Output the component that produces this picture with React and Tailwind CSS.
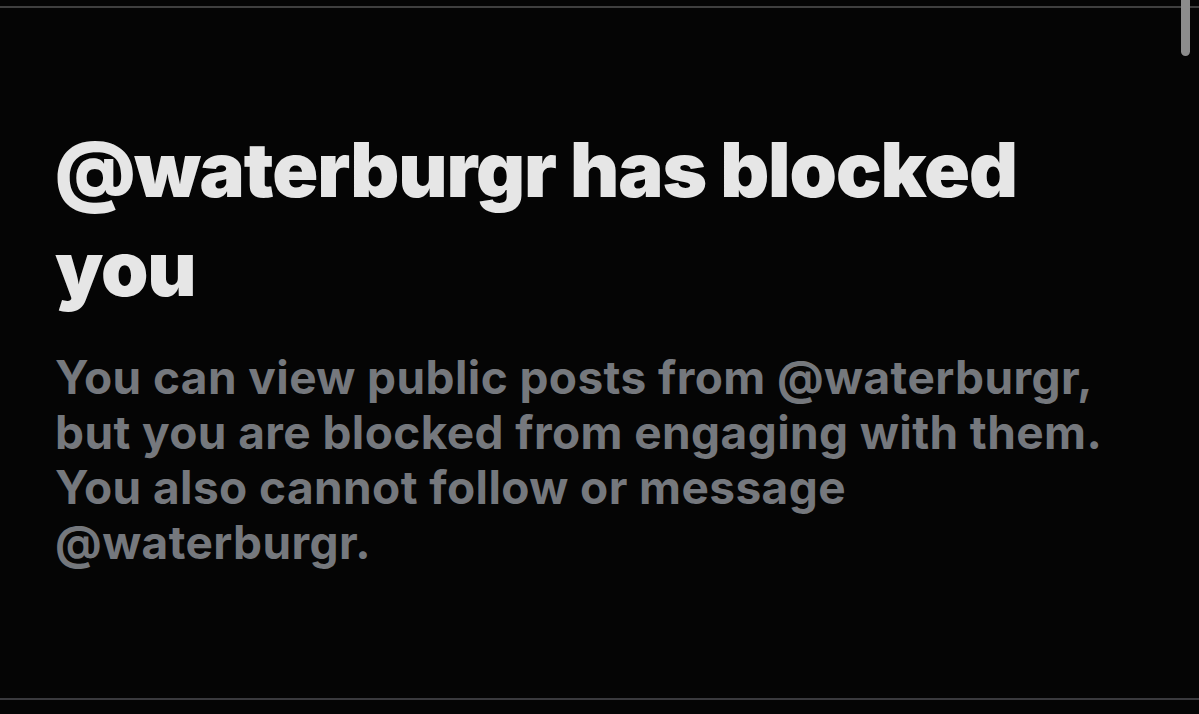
export default function App() {
  return (
    <div className="relative w-[1199px] h-[714px] bg-[#050505] overflow-hidden font-['Inter',sans-serif]">
      {/* top divider */}
      <div className="h-[6px]" />
      <div className="h-[2px] bg-[#3f3f3f]" />

      <div className="pl-[55px] pr-[40px] pt-[112px]">
        <h1 className="text-[76px] leading-[99px] font-black tracking-[-1.1px] text-[#e6e6e6]">
          @waterburgr has blocked you
        </h1>
        <p className="mt-[32px] text-[46px] leading-[55px] font-bold tracking-[0.4px] text-[#75787d]">
          You can view public posts from @waterburgr,
          <br />
          but you are blocked from engaging with them.
          <br />
          You also cannot follow or message
          <br />
          @waterburgr.
        </p>
      </div>

      {/* bottom divider */}
      <div className="absolute left-0 right-0 top-[698px] h-[2px] bg-[#3a3a3e]" />

      {/* scrollbar thumb */}
      <div className="absolute left-[1181px] top-0 w-[9px] h-[56px] rounded-b-full bg-[#8c8c8c]" />
    </div>
  );
}
